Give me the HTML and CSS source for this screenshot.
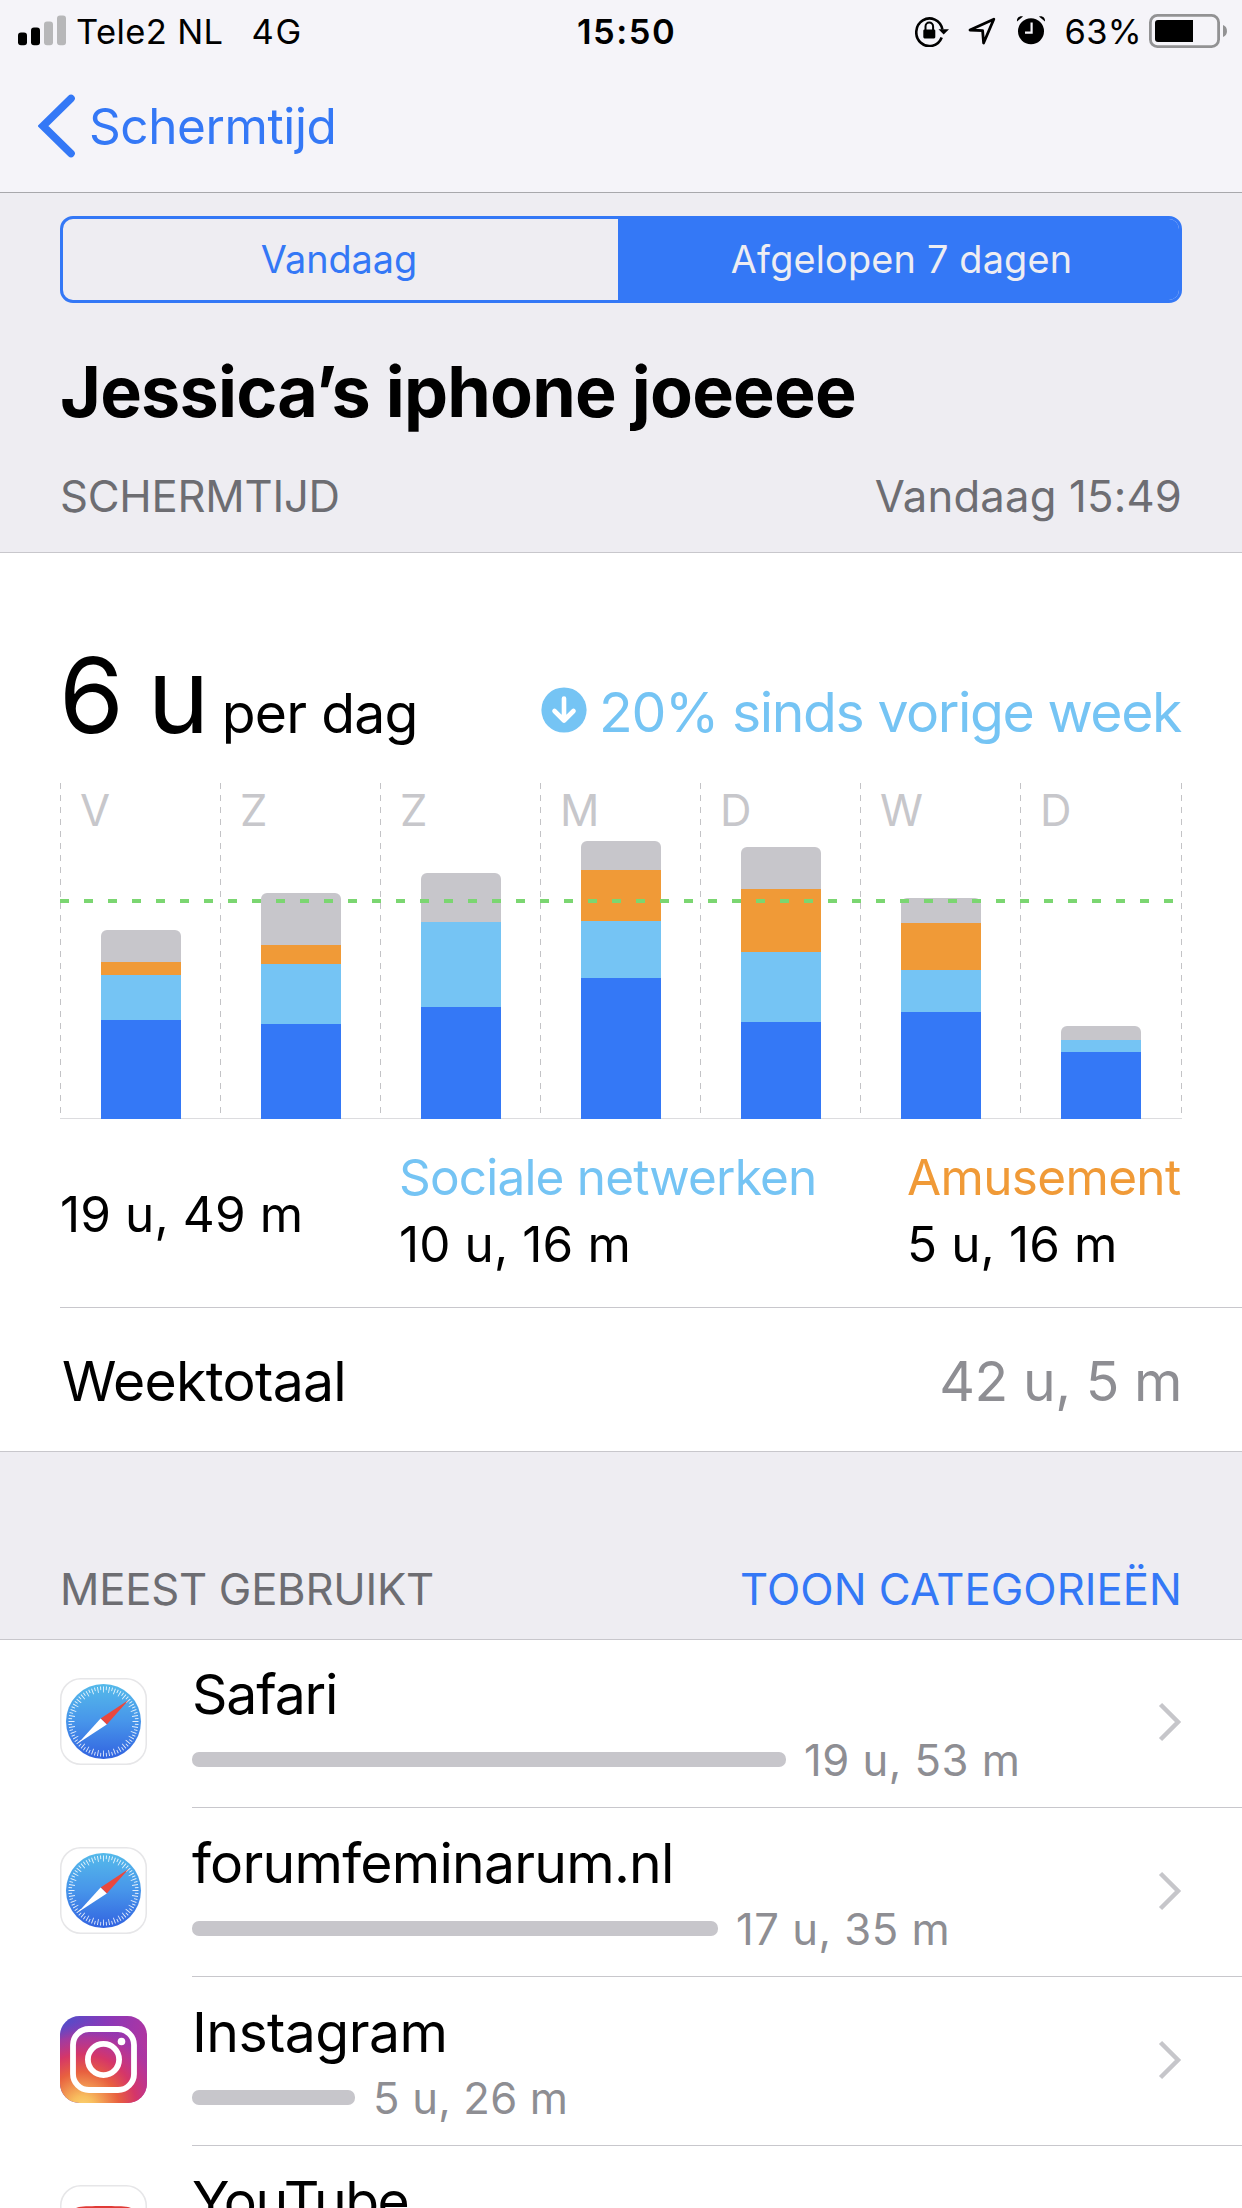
FILE: index.html
```
<!DOCTYPE html>
<html lang="nl">
<head>
<meta charset="utf-8">
<title>Schermtijd</title>
<link rel="stylesheet" href="styles.css">
</head>
<body>
<svg class="defs" width="0" height="0" aria-hidden="true">
  <defs>
    <linearGradient id="sky" x1="0" y1="0" x2="0" y2="1"><stop offset="0" stop-color="#55baea"/><stop offset=".5" stop-color="#4795ea"/><stop offset="1" stop-color="#3263e0"/></linearGradient>
    <linearGradient id="ig-base" x1="0" y1="0" x2="1" y2=".35"><stop offset="0" stop-color="#4c50cb"/><stop offset=".5" stop-color="#8a38b8"/><stop offset="1" stop-color="#b2359f"/></linearGradient>
    <radialGradient id="ig-glow" cx=".26" cy="1.06" r="1"><stop offset="0" stop-color="#fbd673"/><stop offset=".14" stop-color="#f8bd5e"/><stop offset=".42" stop-color="#e8603f"/><stop offset=".62" stop-color="#d53668"/><stop offset=".82" stop-color="#bd3590" stop-opacity=".7"/><stop offset="1" stop-color="#8a38b8" stop-opacity="0"/></radialGradient>
    <symbol id="safari" viewBox="0 0 87 87">
      <rect x=".75" y=".75" width="85.5" height="85.5" rx="20" fill="#fff" stroke="#e6e6e8" stroke-width="1.5"/>
      <circle cx="43.5" cy="43.5" r="37.5" fill="url(#sky)"/>
      <g fill="none" stroke="#fff" stroke-opacity=".85">
        <circle cx="43.5" cy="43.5" r="32" stroke-width="6" pathLength="360" stroke-dasharray="1.6 8.4" stroke-dashoffset=".8"/>
        <circle cx="43.5" cy="43.5" r="33.3" stroke-width="3.6" pathLength="360" stroke-dasharray="1.6 8.4" stroke-dashoffset="5.8"/>
      </g>
      <path d="M68.6 22 40.6 40.4 46.8 46.6Z" fill="#e9473d"/>
      <path d="M18.4 65 40.6 40.4 46.8 46.6Z" fill="#fff"/>
    </symbol>
    <symbol id="instagram" viewBox="0 0 87 87">
      <rect width="87" height="87" rx="19.5" fill="url(#ig-base)"/>
      <rect width="87" height="87" rx="19.5" fill="url(#ig-glow)"/>
      <g fill="none" stroke="#fff" stroke-width="5.8">
        <rect x="13" y="13" width="61" height="61" rx="16"/>
        <circle cx="43.5" cy="43.5" r="15.6"/>
      </g>
      <circle cx="61.5" cy="25.5" r="3.8" fill="#fff"/>
    </symbol>
    <symbol id="youtube" viewBox="0 0 87 87">
      <rect x=".75" y=".75" width="85.5" height="85.5" rx="20" fill="#fff" stroke="#e6e6e8" stroke-width="1.5"/>
      <path d="M43.5 21C55 21 63 21.3 68 22 73 23 75 26 75.500 30 76.500 38 76.500 49 75.500 57 75 61 73 64 68 65 58 66.300 29 66.300 19 65 14 64 12 61 11.500 57 10.500 49 10.500 38 11.500 30 12 26 14 23 19 22 24 21.300 32 21 43.500 21Z" fill="#e03a36"/>
      <path d="M37 34v19l17-9.500Z" fill="#fff"/>
    </symbol>
    <symbol id="chevron" viewBox="0 0 24 40"><path d="M2.500 2.500 20 20 2.500 37.500" fill="none" stroke="#c6c6ca" stroke-width="4.500"/></symbol>
  </defs>
</svg>

<header class="top-bar">
  <div class="status">
    <div class="status-left">
      <svg class="signal" width="49" height="31" viewBox="0 0 49 31"><rect x="0" y="17.500" width="9" height="12.800" rx="3"/><rect x="13" y="12.500" width="9" height="17.800" rx="3"/><g fill="#b7b7b9"><rect x="26" y="6.500" width="9" height="23.800" rx="3"/><rect x="39" y=".5" width="9" height="29.800" rx="3"/></g></svg>
      <span class="carrier">Tele2 NL</span>
      <span class="network">4G</span>
    </div>
    <div class="clock">15:50</div>
    <div class="status-right">
      <svg class="lock" width="34" height="32" viewBox="0 0 34 32"><path d="M26.700 22.500A13.200 13.800 0 1 1 27.400 14.500" fill="none" stroke="#000" stroke-width="2.600"/><path d="M23.500 14.200H34L28.700 19.600Z"/><rect x="8.300" y="14.400" width="12" height="9" rx="1.300"/><path d="M10.500 15v-3.600a3.800 4 0 0 1 7.600 0V15" fill="none" stroke="#000" stroke-width="2"/></svg>
      <svg class="location" width="28" height="29" viewBox="0 0 28 29"><path d="M25.800 2.200 15.600 26 14.600 13.700 2 13Z" fill="none" stroke="#000" stroke-width="2.800" stroke-linejoin="round"/></svg>
      <svg class="alarm" width="30" height="30" viewBox="0 0 30 30"><circle cx="15" cy="16.300" r="13"/><path d="M1 6.500C.5 3 3.500.5 7 1.500ZM29 6.500C29.500 3 26.500.5 23 1.500Z"/><path d="M15.600 7.500v10.100H9" fill="none" stroke="#f5f4f9" stroke-width="2.200"/></svg>
      <span class="percent">63%</span>
      <svg class="battery" width="79" height="34" viewBox="0 0 79 34"><rect x="1.400" y="1.400" width="68.200" height="31.200" rx="7" fill="none" stroke="#929294" stroke-width="2.800"/><rect x="6" y="6" width="38" height="22" rx="3"/><rect x="38" y="6" width="6" height="22"/><path d="M74 11c5.300 1.500 5.300 10.500 0 12Z" fill="#929294"/></svg>
    </div>
  </div>
  <nav class="nav">
    <svg class="back" width="38" height="64" viewBox="0 0 38 64"><path d="M33 4.500 5 32 33 59.500" fill="none" stroke="#3478f6" stroke-width="7.600" stroke-linecap="round" stroke-linejoin="miter"/></svg>
    <a class="back-label">Schermtijd</a>
  </nav>
</header>

<section class="intro">
  <div class="segmented">
    <div class="segment">Vandaag</div>
    <div class="segment segment-on">Afgelopen 7 dagen</div>
  </div>
  <h1 class="device">Jessica’s iphone joeeee</h1>
  <div class="section-head">
    <span>SCHERMTIJD</span>
    <span class="updated">Vandaag 15:49</span>
  </div>
</section>

<section class="usage">
  <div class="summary">
    <span class="average">6 u</span>
    <span class="per-day">per dag</span>
    <span class="trend">
      <svg class="trend-icon" width="46" height="46" viewBox="0 0 46 46"><circle cx="23" cy="23" r="22.600" fill="#75c4f4"/><path d="M23 11.500V32M13.500 24 23 33.500 32.500 24" fill="none" stroke="#fff" stroke-width="4.600" stroke-linecap="round" stroke-linejoin="round"/></svg>
      <span>20% sinds vorige week</span>
    </span>
  </div>

  <div class="chart">
    <div class="day"><span class="day-name">V</span><div class="bar"><i class="other" style="height:32px"></i><i class="fun" style="height:13px"></i><i class="social" style="height:45px"></i><i class="main" style="height:99px"></i></div></div>
    <div class="day"><span class="day-name">Z</span><div class="bar"><i class="other" style="height:52px"></i><i class="fun" style="height:19px"></i><i class="social" style="height:60px"></i><i class="main" style="height:95px"></i></div></div>
    <div class="day"><span class="day-name">Z</span><div class="bar"><i class="other" style="height:49px"></i><i class="social" style="height:85px"></i><i class="main" style="height:112px"></i></div></div>
    <div class="day"><span class="day-name">M</span><div class="bar"><i class="other" style="height:29px"></i><i class="fun" style="height:51px"></i><i class="social" style="height:57px"></i><i class="main" style="height:141px"></i></div></div>
    <div class="day"><span class="day-name">D</span><div class="bar"><i class="other" style="height:42px"></i><i class="fun" style="height:63px"></i><i class="social" style="height:70px"></i><i class="main" style="height:97px"></i></div></div>
    <div class="day"><span class="day-name">W</span><div class="bar"><i class="other" style="height:25px"></i><i class="fun" style="height:47px"></i><i class="social" style="height:42px"></i><i class="main" style="height:107px"></i></div></div>
    <div class="day"><span class="day-name">D</span><div class="bar"><i class="other" style="height:14px"></i><i class="social" style="height:12px"></i><i class="main" style="height:67px"></i></div></div>
    <div class="mean-line"></div>
  </div>

  <div class="legend">
    <div class="legend-item legend-plain"><span class="legend-time">19 u, 49 m</span></div>
    <div class="legend-item"><span class="legend-name social-text">Sociale netwerken</span><span class="legend-time">10 u, 16 m</span></div>
    <div class="legend-item"><span class="legend-name fun-text">Amusement</span><span class="legend-time">5 u, 16 m</span></div>
  </div>

  <div class="total">
    <span class="total-label">Weektotaal</span>
    <span class="total-value">42 u, 5 m</span>
  </div>
</section>

<section class="most-used">
  <div class="section-head most-used-head">
    <span>MEEST GEBRUIKT</span>
    <a class="toggle">TOON CATEGORIEËN</a>
  </div>
  <div class="apps">
    <div class="app">
      <svg class="app-icon" width="87" height="87"><use href="#safari"/></svg>
      <div class="app-body">
        <div class="app-info"><div class="app-name safari-name">Safari</div><div class="app-usage"><i class="meter" style="width:594px"></i><span>19 u, 53 m</span></div></div>
        <svg class="chevron" width="24" height="40"><use href="#chevron"/></svg>
      </div>
    </div>
    <div class="app">
      <svg class="app-icon" width="87" height="87"><use href="#safari"/></svg>
      <div class="app-body">
        <div class="app-info"><div class="app-name">forumfeminarum.nl</div><div class="app-usage"><i class="meter" style="width:526px"></i><span>17 u, 35 m</span></div></div>
        <svg class="chevron" width="24" height="40"><use href="#chevron"/></svg>
      </div>
    </div>
    <div class="app">
      <svg class="app-icon" width="87" height="87"><use href="#instagram"/></svg>
      <div class="app-body">
        <div class="app-info"><div class="app-name instagram-name">Instagram</div><div class="app-usage"><i class="meter" style="width:163px"></i><span class="tight">5 u, 26 m</span></div></div>
        <svg class="chevron" width="24" height="40"><use href="#chevron"/></svg>
      </div>
    </div>
    <div class="app">
      <svg class="app-icon" width="87" height="87"><use href="#youtube"/></svg>
      <div class="app-body">
        <div class="app-info"><div class="app-name youtube-name">YouTube</div></div>
      </div>
    </div>
  </div>
</section>
</body>
</html>
```
FILE: styles.css
```
* { box-sizing: border-box; }
body {
  margin: 0;
  width: 1242px;
  height: 2208px;
  overflow: hidden;
  background: #eeedf2;
  color: #000;
  font-family: Inter, "Liberation Sans", sans-serif;
  white-space: nowrap;
}
.defs { position: absolute; }
svg { display: block; flex: none; }

/* Status and navigation */
.top-bar { background: #f5f4f9; border-bottom: 1px solid #a8a8ac; }
.status {
  display: grid;
  grid-template-columns: 577px auto 1fr;
  align-items: center;
  height: 62px;
  font-size: 34.5px;
  line-height: 62px;
}
.status-left, .status-right { display: flex; align-items: center; }
.status-left { padding-left: 18px; letter-spacing: .39px; }
.signal { margin-top: -2px; }
.carrier { margin-left: 9px; }
.network { margin-left: 28px; letter-spacing: 1.8px; }
.carrier, .network, .clock, .percent { padding-top: 1px; }
.clock { font-weight: 600; letter-spacing: 1.5px; }
.status-right { justify-content: flex-end; padding-right: 14px; }
.lock { margin-top: -2px; }
.location { margin-left: 19px; }
.alarm { margin-left: 20px; margin-top: -3px; }
.percent { margin-left: 19px; letter-spacing: .3px; }
.battery { margin-left: 7px; margin-top: -2px; }
.nav {
  display: flex;
  align-items: center;
  height: 130px;
  padding: 0 0 2px 38px;
  color: #3478f6;
}
.back-label { margin-left: 13px; font-size: 49.5px; letter-spacing: -.4px; }

/* Device heading */
.intro { padding: 23px 60px 28px; border-bottom: 1px solid #c8c7cc; }
.segmented {
  display: grid;
  grid-template-columns: 555px 1fr;
  height: 87px;
  border: 3px solid #3478f6;
  border-radius: 13px;
  overflow: hidden;
}
.segment {
  padding-right: 3px;
  line-height: 81px;
  text-align: center;
  font-size: 37.8px;
  color: #3478f6;
}
.segment-on { padding: 0 0 0 6px; background: #3478f6; color: #eeedf2; letter-spacing: .2px; }
.device {
  margin: 47px 0 36px;
  font-size: 70px;
  font-weight: 700;
  line-height: 84px;
  letter-spacing: -.77px;
}
.section-head {
  display: flex;
  justify-content: space-between;
  font-size: 43.6px;
  line-height: 54px;
  letter-spacing: -.22px;
  color: #6d6d72;
}
.updated { letter-spacing: .19px; }

/* Weekly usage */
.usage { background: #fff; border-bottom: 1px solid #c8c7cc; padding-top: 79px; }
.summary {
  display: flex;
  align-items: baseline;
  height: 126px;
  padding: 0 61px 0 59px;
  font-size: 55.3px;
}
.average { font-size: 104.7px; line-height: 126px; letter-spacing: -2.88px; }
.per-day { margin-left: 15px; letter-spacing: -.73px; }
.trend {
  display: flex;
  align-items: center;
  margin-left: auto;
  padding-top: 2px;
  letter-spacing: -1.4px;
  color: #75c4f4;
}
.trend-icon { margin-right: 12px; }
.trend span { padding-top: 2px; }
.chart {
  position: relative;
  display: grid;
  grid-template-columns: repeat(6, 160px) 1fr;
  height: 336px;
  margin: 25px 60px 0;
  background: linear-gradient(#dcdcdf, #dcdcdf) 0 100% / 100% 1px no-repeat;
}
.day, .chart::after {
  background: repeating-linear-gradient(#c3c3c6 0 6px, transparent 6px 12px) 0 0 / 1px 332px no-repeat;
}
.chart::after {
  content: "";
  position: absolute;
  top: 0;
  right: 0;
  width: 1px;
  height: 332px;
}
.day { display: flex; flex-direction: column; justify-content: space-between; }
.day-name { padding: 1px 0 0 20px; font-size: 43.6px; line-height: 54px; color: #c7c7cb; }
.bar {
  width: 80px;
  margin-left: 41px;
  border-radius: 6px 6px 0 0;
  overflow: hidden;
}
.bar i { display: block; }
.other { background: #c7c6cb; }
.fun { background: #f09a37; }
.social { background: #75c4f4; }
.main { background: #3478f6; }
.mean-line {
  position: absolute;
  left: 0;
  right: 0;
  top: 116px;
  height: 4px;
  background: repeating-linear-gradient(90deg, #7bd671 0 9px, transparent 9px 24px);
}
.legend {
  display: grid;
  grid-template-columns: 339px 508px auto;
  height: 188px;
  padding: 25px 0 29px 60px;
  font-size: 49.5px;
  line-height: 67px;
}
.legend-item { display: flex; flex-direction: column; justify-content: center; }
.legend-plain { padding-top: 7px; }
.legend-name { letter-spacing: -.82px; }
.legend-time { letter-spacing: .1px; }
.social-text { color: #75c4f4; }
.fun-text { color: #f09a37; letter-spacing: -.66px; }
.total {
  display: flex;
  justify-content: space-between;
  align-items: center;
  height: 144px;
  margin-left: 60px;
  padding: 1px 60px 0 2px;
  border-top: 1px solid #c8c7cc;
  font-size: 55.3px;
}
.total-label { letter-spacing: -.7px; }
.total-value { letter-spacing: -.45px; color: #8e8e93; }

/* Most used apps */
.most-used-head { padding: 111px 60px 22px; }
.toggle { color: #3478f6; letter-spacing: .05px; }
.apps { background: #fff; box-shadow: inset 0 1px #c8c7cc; }
.app { display: flex; height: 169px; padding-left: 60px; }
.app-icon { margin: 39px 45px 0 0; }
.app-body {
  display: flex;
  flex: 1;
  align-items: center;
  padding: 0 60px 3px 0;
  border-bottom: 1px solid #c8c7cc;
}
.app-info { flex: 1; align-self: flex-start; padding-top: 22px; }
.app-name { font-size: 55.3px; line-height: 66px; letter-spacing: -.76px; }
.safari-name { letter-spacing: -1.15px; }
.instagram-name { letter-spacing: -.55px; }
.youtube-name { letter-spacing: -1.5px; }
.app-usage {
  display: flex;
  align-items: center;
  gap: 18px;
  margin-top: 5px;
  font-size: 43.6px;
  line-height: 54px;
  letter-spacing: .5px;
  color: #8e8e93;
}
.app-usage span { padding-top: 2px; margin-bottom: -2px; }
.app-usage .tight { letter-spacing: .2px; }
.meter { height: 15px; border-radius: 7px; background: #c7c6cb; }
```
